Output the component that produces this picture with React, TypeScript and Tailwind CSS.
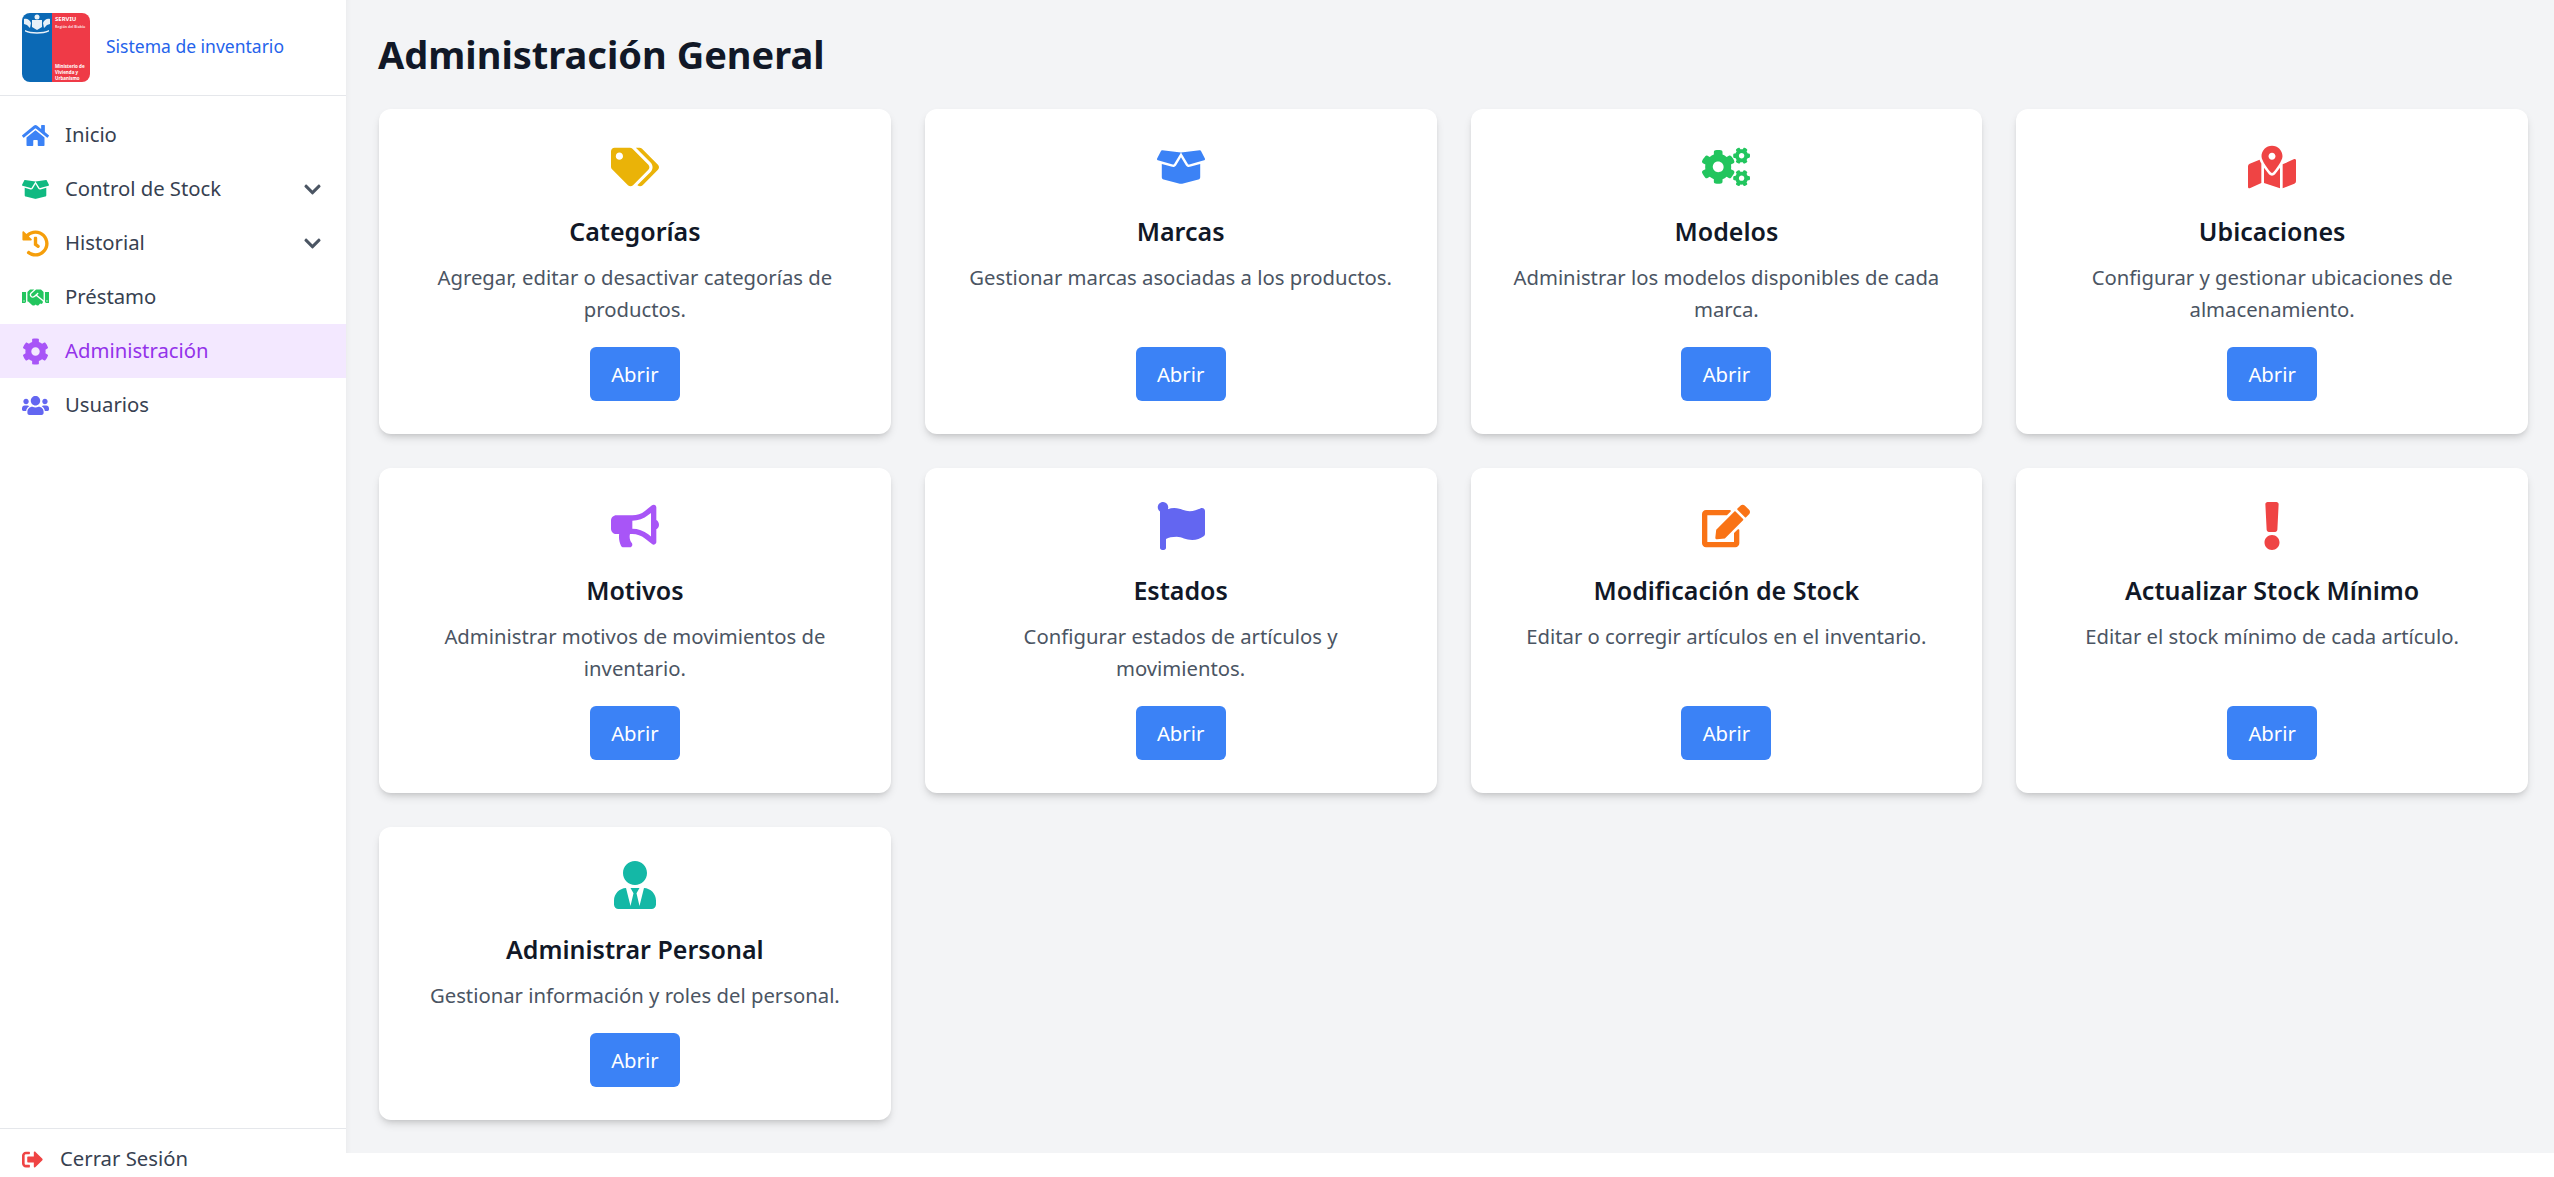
import React from 'react';
import {
  FaBoxOpen, FaBullhorn, FaChevronDown, FaCog, FaCogs, FaEdit, FaExclamation, FaFlag, FaHandshake,
  FaHistory, FaHome, FaMapMarkedAlt, FaSignOutAlt, FaTags, FaUsers, FaUserTie,
} from 'react-icons/fa';

const navItems = [
  { label: 'Inicio', icon: FaHome, color: 'text-[#3b82f6]' },
  { label: 'Control de Stock', icon: FaBoxOpen, color: 'text-[#10b981]', arrow: true },
  { label: 'Historial', icon: FaHistory, color: 'text-[#f59e0b]', arrow: true },
  { label: 'Préstamo', icon: FaHandshake, color: 'text-[#22c55e]' },
  { label: 'Administración', icon: FaCog, color: 'text-[#a855f7]', active: true },
  { label: 'Usuarios', icon: FaUsers, color: 'text-[#6366f1]' },
];

const cards = [
  { title: 'Categorías', desc: 'Agregar, editar o desactivar categorías de productos.', icon: FaTags, color: 'text-[#eab308]' },
  { title: 'Marcas', desc: 'Gestionar marcas asociadas a los productos.', icon: FaBoxOpen, color: 'text-[#3b82f6]' },
  { title: 'Modelos', desc: 'Administrar los modelos disponibles de cada marca.', icon: FaCogs, color: 'text-[#22c55e]' },
  { title: 'Ubicaciones', desc: 'Configurar y gestionar ubicaciones de almacenamiento.', icon: FaMapMarkedAlt, color: 'text-[#ef4444]' },
  { title: 'Motivos', desc: 'Administrar motivos de movimientos de inventario.', icon: FaBullhorn, color: 'text-[#a855f7]' },
  { title: 'Estados', desc: 'Configurar estados de artículos y movimientos.', icon: FaFlag, color: 'text-[#6366f1]' },
  { title: 'Modificación de Stock', desc: 'Editar o corregir artículos en el inventario.', icon: FaEdit, color: 'text-[#f97316]' },
  { title: 'Actualizar Stock Mínimo', desc: 'Editar el stock mínimo de cada artículo.', icon: FaExclamation, color: 'text-[#ef4444]' },
  { title: 'Administrar Personal', desc: 'Gestionar información y roles del personal.', icon: FaUserTie, color: 'text-[#14b8a6]' },
];

const Logo = () => (
  <div className="flex w-[68px] h-[69px] rounded-lg overflow-hidden shrink-0">
    <div className="w-[30px] bg-[#0b69b5] pt-[1px] pl-[1px]">
      <svg viewBox="0 0 28 20" className="w-[28px] h-[20px]" fill="#e8f1f8">
        <circle cx="14" cy="3" r="2.5" />
        <path d="M9 6h10v7l-5 3-5-3z" />
        <path d="M1 5c3-1 6 1 7 4l-1 5-3-3-3-1zM27 5c-3-1-6 1-7 4l1 5 3-3 3-1z" />
        <path d="M2 16c6 3 18 3 24 0v1.500c-6 3-18 3-24 0z" />
      </svg>
    </div>
    <div className="flex-1 bg-[#ef3a47] flex flex-col justify-between pl-[3px] py-[1px] text-white font-bold">
      <div className="mt-[2px] leading-[7px]">
        <div className="text-[6px]">SERVIU</div>
        <div className="text-[3.5px] opacity-80">Región del Biobío</div>
      </div>
      <div className="text-[4.5px] leading-[6px] whitespace-nowrap">
        <div>Ministerio de</div>
        <div>Vivienda y</div>
        <div>Urbanismo</div>
      </div>
    </div>
  </div>
);

const App: React.FC = () => {
  return (
    <div className="flex items-start h-[1177px] overflow-hidden bg-white font-['Noto_Sans',sans-serif]">
      {/* Sidebar */}
      <aside className="flex flex-col w-[346px] h-[1177px] shrink-0 bg-white">
        <div className="flex items-center gap-[16px] h-[96px] pl-[22px] border-b border-[#e5e7eb]">
          <Logo />
          <span className="pb-[2px] text-[17.5px] text-[#2563eb]">Sistema de inventario</span>
        </div>
        <nav className="flex flex-col flex-1 pt-[12px]">
          {navItems.map((item) => (
            <div
              key={item.label}
              className={`flex items-center h-[54px] pl-[22px] pr-[24px] ${item.active ? 'bg-[#f3e8ff] text-[#9333ea]' : 'text-[#374151]'}`}
            >
              <item.icon className={`w-[27px] h-[27px] ${item.color}`} />
              <span className="ml-[16px] pb-[2px] text-[20.3px] flex-1">{item.label}</span>
              {item.arrow && <FaChevronDown className="w-[19px] h-[19px] text-[#4b5563]" />}
            </div>
          ))}
        </nav>
        {/* el pie queda cortado por el borde de la ventana */}
        <div className="flex items-start h-[49px] pl-[22px] pt-[15px] border-t border-[#e5e7eb] text-[#374151]">
          <FaSignOutAlt className="w-[21px] h-[21px] mt-[5px] text-[#ef4444]" />
          <span className="ml-[17px] text-[20.3px] leading-[28px]">Cerrar Sesión</span>
        </div>
      </aside>

      {/* Main */}
      <main className="flex-1 h-[1153px] bg-[#f3f4f6] pl-[33px] pr-[26px] pt-[27px] shadow-[inset_6px_0_6px_-6px_rgba(0,0,0,0.06)]">
        <h1 className="-ml-px text-[38px] leading-[54px] font-bold text-[#111827] mb-[28px]">Administración General</h1>
        <div className="grid grid-cols-4 gap-x-[34px] gap-y-[34px]">
          {cards.map((card) => (
            <div key={card.title} className="flex flex-col items-center bg-white rounded-xl shadow-[0_5px_9px_-1px_rgba(0,0,0,0.13),0_3px_5px_-2px_rgba(0,0,0,0.1)] pt-[34px] pb-[33px] px-[32px] text-center">
              <card.icon className={`w-[48px] h-[48px] ${card.color}`} />
              <h2 className="mt-[22px] text-[25px] leading-[36px] font-semibold text-[#111827]">{card.title}</h2>
              <p className="mt-[12px] mb-[22px] flex-1 text-[20.3px] leading-[32px] text-[#4b5563]">{card.desc}</p>
              <button className="w-[90px] h-[54px] rounded-md bg-[#3b82f6] text-white text-[20.3px]">Abrir</button>
            </div>
          ))}
        </div>
      </main>
    </div>
  );
};

export default App;
